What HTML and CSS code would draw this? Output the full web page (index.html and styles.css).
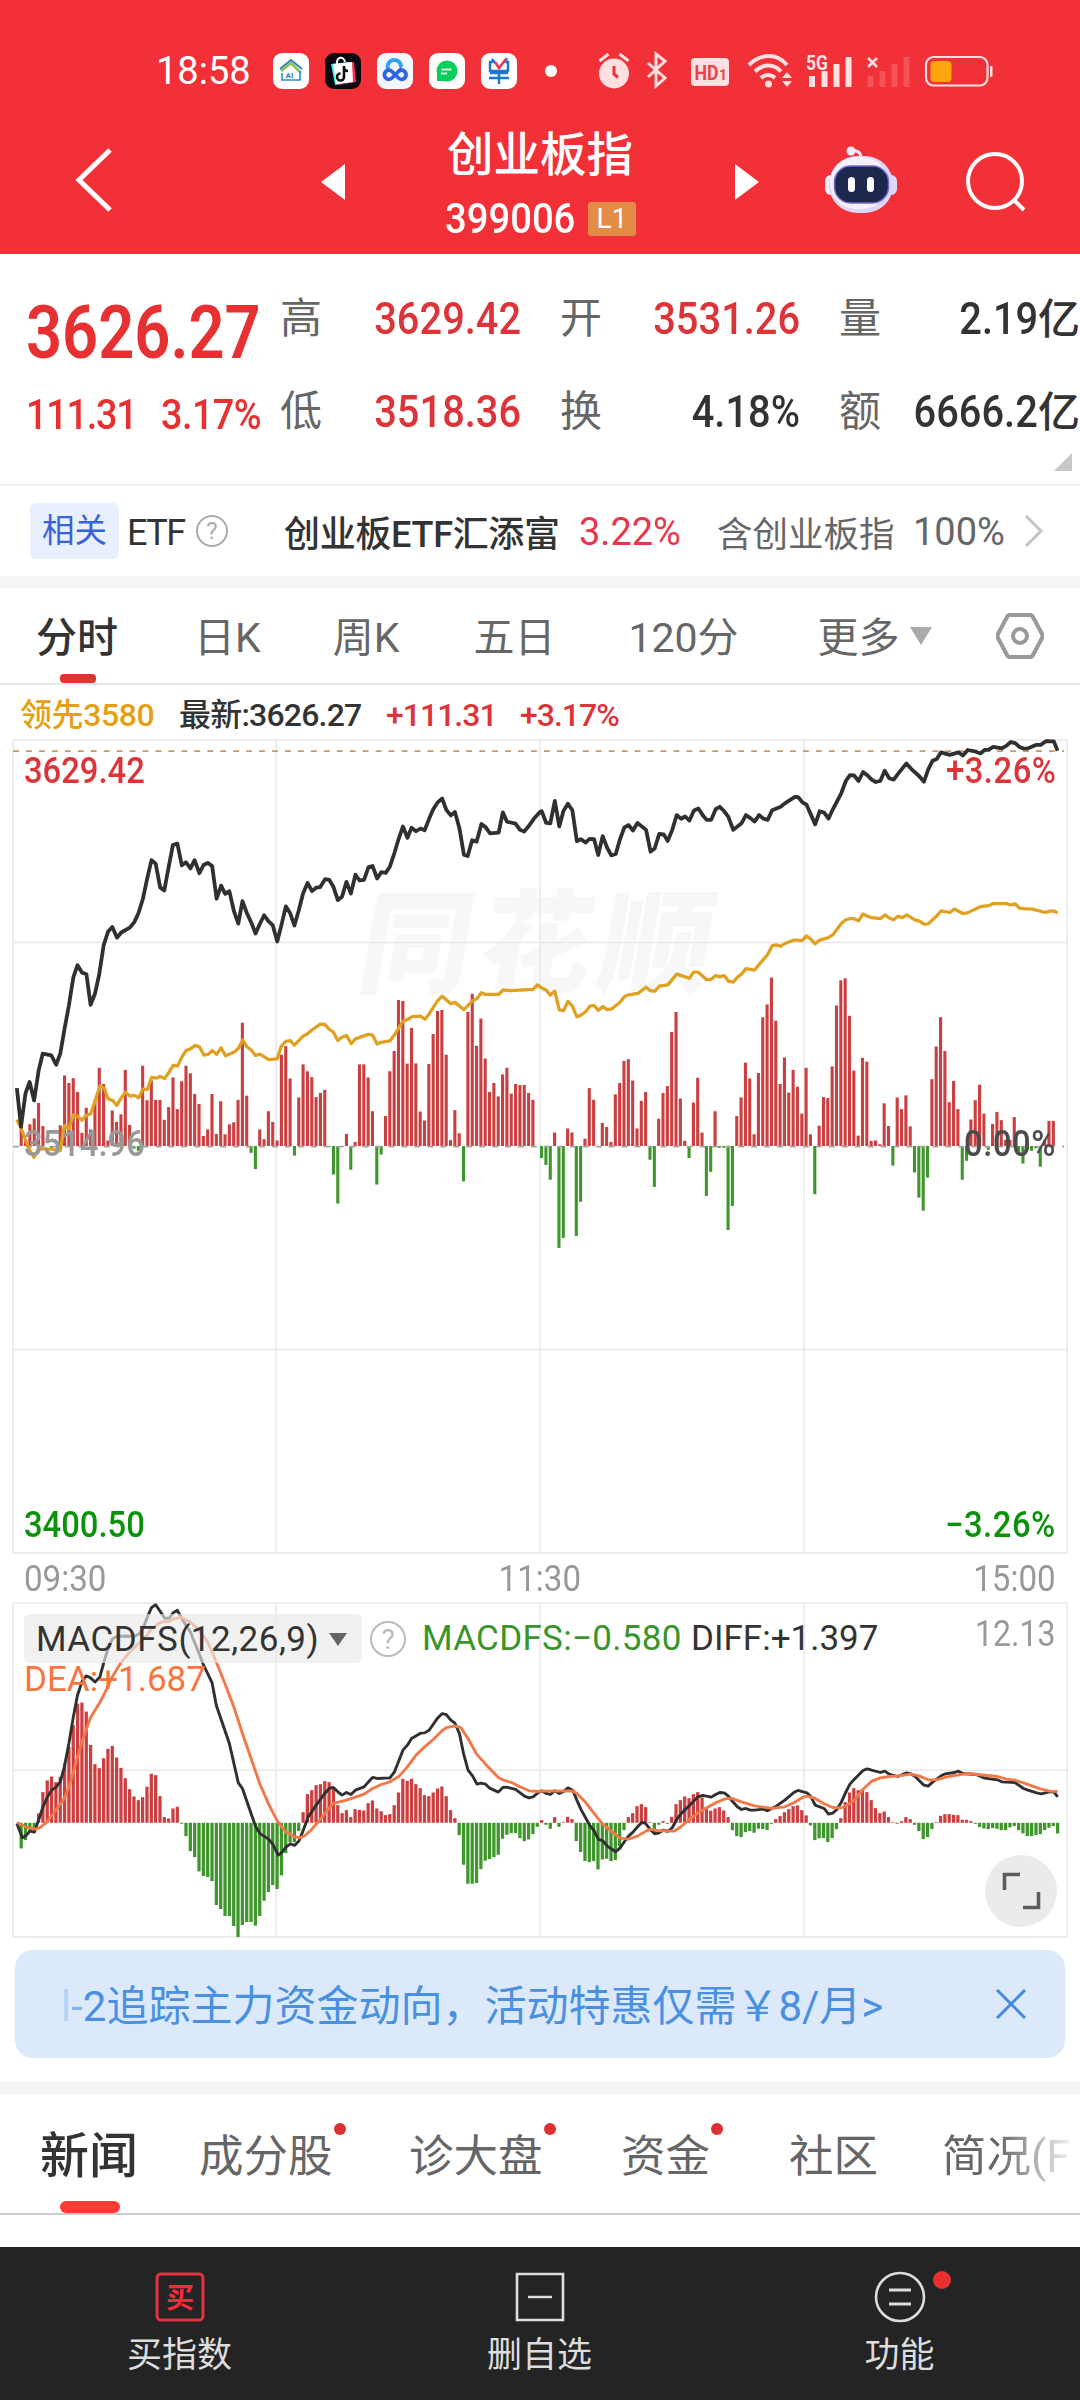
FILE: index.html
```html
<!DOCTYPE html>
<html lang="zh-CN">
  <head>
    <meta charset="UTF-8" />
    <meta name="viewport" content="width=device-width, initial-scale=1.0" />
    <title>创业板指 399006</title>
    <link rel="stylesheet" href="styles.css">
  </head>
  <body>
    <header class="header">
      <div class="status">
        <span class="clock">18:58</span>
        <div class="apps">
          <svg viewBox="0 0 36 36"><rect width="36" height="36" rx="9" fill="#fff"/><path d="M7 16L18 7l11 9" fill="none" stroke="#2b86b8" stroke-width="2"/><path d="M8 18l10-8 10 10" fill="none" stroke="#8cc152" stroke-width="2.5"/><path d="M9 20v7h18v-9" fill="none" stroke="#2f8fc6" stroke-width="1.6"/><text x="12.500" y="25" font-size="8" font-weight="700" fill="#2f7fc6">AI</text></svg>
          <svg viewBox="0 0 36 36"><rect width="36" height="36" rx="9" fill="#0c0810"/><path d="M10 11l19-2 2 20-18 3z" fill="#fe2c55"/><path d="M6 11l18-2 2 20-16 3z" fill="#25f4ee"/><path d="M8 11l19-2 1 20-17 2z" fill="#fff"/><path d="M12 11c-1-8 7-8 8-2" fill="none" stroke="#fff" stroke-width="2"/><path d="M19 13v11a3.500 3.500 0 1 1-3.500-3.500M19 14c0 3 2 4 4 4" fill="none" stroke="#111" stroke-width="2.600"/></svg>
          <svg viewBox="0 0 36 36"><rect width="36" height="36" rx="9" fill="#f3f7ff"/><path d="M11.500 17a6.700 6.700 0 1 1 12.500-3" fill="none" stroke="#36a3f2" stroke-width="4"/><path d="M25 15L15 25a4.500 4.500 0 1 1 0-6.500l6.500 6.500a4.500 4.500 0 1 0 0-6.500" fill="none" stroke="#2e63e8" stroke-width="3.800"/></svg>
          <svg viewBox="0 0 36 36"><rect width="36" height="36" rx="9" fill="#fff"/><circle cx="18" cy="18" r="10.500" fill="#06cf5c"/><path d="M8 21v7h8z" fill="#06cf5c"/><path d="M12.500 16.500h10M12 20.500h6" stroke="#d8ffe6" stroke-width="1.800"/></svg>
          <svg viewBox="0 0 36 36"><rect width="36" height="36" rx="9" fill="#fff"/><path d="M12 9H9v9h18V9h-3M18 18v13M9 20h18M8 25h20M11 6l3 4M26 5l-2 4" fill="none" stroke="#1b76d2" stroke-width="2.400"/><path d="M14 9l4 6 7-9" fill="none" stroke="#e8385a" stroke-width="2.600"/></svg>
        </div>
        <i class="more-dot"></i>
        <svg class="indicators" viewBox="0 0 400 40">
          <g fill="#ffdfe0">
            <circle cx="17" cy="22.500" r="15"/>
            <path d="M2.500 10l9-7M31.500 10l-9-7" stroke="#ffdfe0" stroke-width="3"/>
            <path d="M17 15v8l4 3.500" fill="none" stroke="#f13038" stroke-width="3"/>
            <path d="M51 12l17 15-9 8V3l9 7-17 16" fill="none" stroke="#ffdfe0" stroke-width="3"/>
            <rect x="94" y="7" width="38" height="28" rx="4"/>
            <text x="97.500" y="28.500" font-size="21" font-weight="700" textLength="24" lengthAdjust="spacingAndGlyphs" fill="#e8434a">HD</text>
            <text x="122" y="29" font-size="14" font-weight="700" fill="#e8434a">1</text>
            <path d="M152 14c12-12 28-12 38 0M158 20.500c8-8 19-8 26 0M164 27c4-4 10-4 14 0" fill="none" stroke="#ffdfe0" stroke-width="4"/>
            <circle cx="171.500" cy="33" r="3.500"/>
            <path d="M185 27l5-6 5 6zM185 30l5 6 5-6z"/>
            <text x="209" y="19" font-size="20" font-weight="700" textLength="22" lengthAdjust="spacingAndGlyphs">5G</text>
            <path d="M212 25h6v11h-6zM224.500 20h6v16h-6zM236.500 13h6v23h-6zM248.500 6h6v30h-6z"/>
            <path d="M271 7l9 9M280 7l-9 9" stroke="#ffdfe0" stroke-width="2.600"/>
            <path d="M270.500 25h6v11h-6zM282.500 20h6v16h-6zM294.500 13h6v23h-6zM306.500 6h6v30h-6z" opacity=".2"/>
            <rect x="329" y="6" width="61.500" height="28.500" rx="7.500" fill="none" stroke="#ffdfe0" stroke-width="2.200"/>
            <rect x="333.500" y="10" width="21" height="21" rx="4" fill="#ffa60f"/>
            <rect x="393" y="15" width="2.500" height="11" rx="1"/>
          </g>
        </svg>
      </div>
      <div class="titlebar">
        <svg class="back" viewBox="0 0 38 66"><path d="M35 3L4 33l31 30" fill="none" stroke="#fff" stroke-width="5"/></svg>
        <svg class="prev" viewBox="0 0 24 36"><path d="M24 0v36L0 18z" fill="#fff"/></svg>
        <div class="title">
          <h1>创业板指</h1>
          <div class="code"><span class="num">399006</span><span class="level">L1</span></div>
        </div>
        <svg class="next" viewBox="0 0 24 36"><path d="M0 0v36l24-18z" fill="#fff"/></svg>
        <svg class="robot" viewBox="0 0 72 68">
          <path d="M36 12c0-6-4-8-10-7" fill="none" stroke="#f4e6f4" stroke-width="3"/>
          <circle cx="26" cy="5" r="4.500" fill="#fbeaf1"/>
          <rect x="0" y="29" width="14" height="20" rx="6" fill="#f0edfd"/>
          <rect x="58" y="29" width="14" height="20" rx="6" fill="#dcdafb"/>
          <rect x="4" y="10" width="64" height="57" rx="28" fill="#dcd6f8"/>
          <rect x="5" y="11" width="58" height="52" rx="26" fill="#f4f1fd"/>
          <rect x="9.500" y="20" width="54" height="37" rx="16" fill="#1c284b" stroke="#7468d2" stroke-width="1.500"/>
          <rect x="23" y="31" width="7" height="15" rx="3.500" fill="#fff"/>
          <rect x="42" y="31" width="7" height="15" rx="3.500" fill="#fff"/>
        </svg>
        <svg class="search" viewBox="0 0 62 62"><circle cx="30" cy="30" r="27" fill="none" stroke="#fff" stroke-width="4"/><path d="M48 48l11 11" stroke="#fff" stroke-width="4"/></svg>
      </div>
    </header>

    <section class="quote">
      <div class="last">
        <div class="price">3626.27</div>
        <div class="change"><span>111.31</span><span>3.17%</span></div>
      </div>
      <dl class="stats">
        <div><dt>高</dt><dd class="up"><span class="num">3629.42</span></dd></div>
        <div><dt>开</dt><dd class="up"><span class="num">3531.26</span></dd></div>
        <div><dt>量</dt><dd><span class="num">2.19</span><b>亿</b></dd></div>
        <div><dt>低</dt><dd class="up"><span class="num">3518.36</span></dd></div>
        <div><dt>换</dt><dd><span class="num">4.18%</span></dd></div>
        <div><dt>额</dt><dd><span class="num">6666.2</span><b>亿</b></dd></div>
      </dl>
      <i class="corner"></i>
    </section>

    <section class="etf">
      <span class="tag">相关</span>
      <span class="etf-label">ETF</span>
      <i class="help">?</i>
      <span class="etf-name">创业板ETF汇添富</span>
      <span class="etf-rate">3.22%</span>
      <span class="etf-hold">含创业板指</span>
      <span class="etf-pct">100%</span>
      <svg class="arrow" viewBox="0 0 20 34"><path d="M2 2l15 15L2 32" fill="none" stroke="#c4c4c4" stroke-width="3"/></svg>
    </section>

    <nav class="periods">
      <a class="active">分时</a>
      <a>日K</a>
      <a>周K</a>
      <a>五日</a>
      <a>120分</a>
      <a>更多<i class="caret"></i></a>
      <svg class="gear" viewBox="0 0 48 46"><path d="M14 2h20q2 0 3 2l9 17q1 2 0 4l-9 17q-1 2-3 2H14q-2 0-3-2L2 25q-1-2 0-4l9-17q1-2 3-2z" fill="none" stroke="#999" stroke-width="4"/><circle cx="24" cy="23" r="7" fill="none" stroke="#999" stroke-width="4"/></svg>
    </nav>

    <div class="legend">
      <span class="lead">领先3580</span>
      <span class="now">最新:3626.27</span>
      <span class="up diff">+111.31</span>
      <span class="up">+3.17%</span>
    </div>

    <section class="chart">
      <div class="watermark">同花顺</div>
      <svg id="trend" viewBox="0 29 3136 2361" preserveAspectRatio="none"></svg>
      <span class="mark top left up">3629.42</span>
      <span class="mark top right up">+3.26%</span>
      <span class="mark mid left">3514.96</span>
      <span class="mark mid right">0.00%</span>
      <span class="mark low left">3400.50</span>
      <span class="mark low right">−3.26%</span>
    </section>
    <div class="times"><span>09:30</span><span>11:30</span><span>15:00</span></div>

    <section class="chart macd">
      <svg id="macd" viewBox="0 368 3136 1003" preserveAspectRatio="none"></svg>
      <div class="readout">
        <span class="picker">MACDFS(12,26,9)<i class="caret"></i></span>
        <i class="help">?</i>
        <span class="hist">MACDFS:−0.580</span>
        <span class="dif">DIFF:+1.397</span>
        <span class="max">12.13</span>
      </div>
      <span class="dea">DEA:+1.687</span>
      <svg class="expand" viewBox="0 0 72 72"><circle cx="36" cy="36" r="36" fill="#ebebeb"/><path d="M35 19.500H19.500V35M38 52.500h15.500V37" fill="none" stroke="#5c5c5c" stroke-width="3.600"/></svg>
    </section>

    <div class="banner">
      <p><em>l</em><em>-</em>2追踪主力资金动向，活动特惠仅需￥8/月&gt;</p>
      <svg viewBox="0 0 30 30"><path d="M1 1l28 28M29 1L1 29" stroke="#4189df" stroke-width="3"/></svg>
    </div>

    <nav class="news">
      <a class="active">新闻</a>
      <a class="dot">成分股</a>
      <a class="dot">诊大盘</a>
      <a class="dot">资金</a>
      <a>社区</a>
      <a class="cut">简况(F</a>
    </nav>

    <footer class="toolbar">
      <a>
        <svg viewBox="0 0 52 52"><rect x="3" y="3" width="46" height="46" rx="4" fill="none" stroke="#e23240" stroke-width="3"/><text x="26" y="37" font-size="28" font-weight="700" text-anchor="middle" fill="#f8293d">买</text></svg>
        买指数
      </a>
      <a>
        <svg viewBox="0 0 52 52"><path d="M3 3h46v46H3zM14 26h24" fill="none" stroke="#ddd" stroke-width="2.600"/></svg>
        删自选
      </a>
      <a class="dot">
        <svg viewBox="0 0 52 52"><circle cx="26" cy="26" r="24" fill="none" stroke="#ddd" stroke-width="2.600"/><path d="M15 19h22M15 33h22" stroke="#ddd" stroke-width="3"/></svg>
        功能
      </a>
    </footer>
    <script src="chart.js"></script>
  </body>
</html>
```

FILE: styles.css
```css
* {
  margin: 0;
  padding: 0;
  box-sizing: border-box;
}
body {
  width: 1080px;
  height: 2400px;
  overflow: hidden;
  display: flex;
  flex-direction: column;
  background: #fff;
  color: #333;
  font-family: Roboto, "Noto Sans CJK SC", sans-serif;
}
svg {
  display: block;
  flex: none;
}
i,
em {
  font-style: normal;
}
.up {
  color: #dc3438;
}
/* narrow figures */
.num {
  display: inline-block;
  transform: scaleX(0.9);
}

/* header */
.header {
  flex: none;
  height: 254px;
  background: #f23037;
  color: #fff;
}
.status {
  display: flex;
  align-items: center;
  height: 106px;
  padding: 36px 0 0 156px;
}
.clock {
  width: 117px;
  font-size: 38px;
  line-height: 70px;
}
.apps {
  display: flex;
  gap: 16px;
}
.apps svg {
  width: 36px;
  height: 36px;
}
.more-dot {
  width: 12px;
  height: 12px;
  margin-left: 28px;
  border-radius: 50%;
  background: #fff;
}
.indicators {
  width: 400px;
  height: 40px;
  margin-left: 40px;
}
.titlebar {
  display: flex;
  align-items: center;
  height: 148px;
  padding-left: 75px;
}
.back {
  width: 38px;
  height: 66px;
}
.prev,
.next {
  width: 24px;
  height: 36px;
  margin-top: 4px;
}
.prev {
  margin-left: 208px;
}
.title {
  width: 390px;
  padding-top: 16px;
  text-align: center;
}
.title h1 {
  font-size: 46.5px;
  font-weight: 500;
  line-height: 62px;
}
.code {
  display: flex;
  align-items: center;
  height: 66px;
  padding-left: 100px;
  font-size: 42px;
  font-weight: 500;
  line-height: 66px;
}
.code .num {
  width: 143px;
  transform: scaleX(0.91);
  transform-origin: left;
  text-align: left;
}
.level {
  width: 48px;
  height: 34px;
  border-radius: 3px;
  background: #e28c48;
  font-size: 28px;
  font-weight: 400;
  line-height: 34px;
}
.robot {
  width: 72px;
  height: 68px;
  margin-left: 66px;
}
.search {
  width: 62px;
  height: 62px;
  margin: 3px 0 0 68px;
}

/* quote */
.quote {
  flex: none;
  position: relative;
  display: flex;
  height: 232px;
  padding-top: 19px;
  border-bottom: 2px solid #eee;
}
.last {
  flex: none;
  width: 280px;
  padding-left: 26px;
  color: #e63031;
}
.price {
  width: 255px;
  height: 96px;
  padding-top: 10px;
  font-size: 73.5px;
  font-weight: 600;
  line-height: 100px;
  transform: scaleX(0.86);
  transform-origin: left;
}
.change {
  display: flex;
  font-size: 42px;
  font-weight: 500;
  letter-spacing: -0.6px;
  line-height: 92px;
  white-space: nowrap;
}
.change span {
  flex: none;
  transform: scaleX(0.9);
  transform-origin: left;
}
.change span:first-child {
  width: 135px;
  letter-spacing: -1.4px;
}
.stats {
  display: grid;
  grid-template-columns: 241px 240px 241px;
  column-gap: 39px;
  grid-auto-rows: 93px;
}
.stats div {
  display: flex;
  justify-content: space-between;
  line-height: 92px;
}
.stats dt {
  font-size: 42px;
  color: #666;
}
.stats dd {
  font-size: 44.5px;
  font-weight: 500;
  white-space: nowrap;
}
.stats .num {
  transform: scaleX(0.895);
  transform-origin: right;
}
.stats b {
  font-size: 42px;
  font-weight: 500;
}
.corner {
  position: absolute;
  right: 8px;
  bottom: 13px;
  border-left: 18px solid transparent;
  border-bottom: 18px solid #c8c8c8;
}

/* related fund */
.etf {
  flex: none;
  display: flex;
  align-items: center;
  height: 102px;
  padding-left: 30px;
  border-bottom: 12px solid #f4f4f4;
  font-size: 36px;
  white-space: nowrap;
}
.tag {
  width: 89px;
  height: 56px;
  border-radius: 6px;
  background: #e8effd;
  color: #3a62dd;
  font-size: 32.5px;
  line-height: 57px;
  text-align: center;
}
.etf-label {
  width: 68px;
  padding: 3px 0 0 8px;
  letter-spacing: -1.5px;
}
.help {
  width: 32px;
  height: 32px;
  margin-left: 9px;
  border: 2px solid #aaa;
  border-radius: 50%;
  color: #aaa;
  font-size: 24px;
  line-height: 29px;
  text-align: center;
}
.etf-name {
  width: 295px;
  margin-left: 56px;
  font-weight: 500;
  letter-spacing: -0.3px;
}
.etf-rate {
  width: 138px;
  padding-top: 2px;
  color: #e8344e;
  font-size: 38px;
}
.etf-hold {
  width: 196px;
  color: #666;
  font-size: 35.5px;
}
.etf-pct {
  width: 111px;
  padding-top: 2px;
  color: #666;
  font-size: 38px;
}
.arrow {
  width: 20px;
  height: 34px;
}

/* period tabs */
.periods {
  flex: none;
  display: flex;
  align-items: center;
  height: 97px;
  padding: 0 36px;
  border-bottom: 2px solid #e6e6e6;
  color: #666;
  font-size: 41px;
  line-height: 101px;
  white-space: nowrap;
}
.periods a {
  position: relative;
  height: 95px;
  margin-right: 74px;
}
.periods .active {
  color: #333;
  font-weight: 500;
}
.periods a:nth-child(1) {
  margin-right: 76px;
}
.periods a:nth-child(2) {
  margin-right: 72px;
}
.periods a:nth-child(4) {
  margin-right: 73px;
}
.periods a:nth-child(5) {
  margin-right: 79px;
}
.periods a:nth-child(6) {
  margin-right: 0;
}
.periods .active::after {
  content: "";
  position: absolute;
  left: 24px;
  bottom: 0;
  width: 36px;
  height: 9px;
  border-radius: 4px;
  background: #e93030;
}
.caret {
  display: inline-block;
  margin-left: 10px;
  border: 11px solid transparent;
  border-top: 18px solid #aaa;
  border-bottom: 0;
  vertical-align: 7px;
}
.gear {
  width: 48px;
  height: 46px;
  margin-left: auto;
}

.legend {
  flex: none;
  display: flex;
  height: 55px;
  padding-left: 20px;
  font-size: 32px;
  line-height: 60px;
  white-space: nowrap;
}
.lead {
  width: 159px;
  color: #e5a012;
  font-weight: 500;
  letter-spacing: -0.4px;
}
.now {
  width: 207px;
  font-weight: 500;
  letter-spacing: -0.8px;
}
.diff {
  width: 134px;
}
.legend .up {
  font-weight: 500;
  letter-spacing: -1px;
}

/* charts */
.chart {
  flex: none;
  position: relative;
  height: 813px;
}
#trend,
#macd {
  position: relative;
  width: 1080px;
  height: 100%;
  overflow: visible;
}
.watermark {
  position: absolute;
  left: 361px;
  top: 143px;
  color: #f7f7f7;
  font-size: 112px;
  font-weight: 900;
  letter-spacing: 8px;
  line-height: 126px;
  transform: skewX(-10deg);
}
.mark {
  position: absolute;
  font-size: 36px;
  font-weight: 500;
  line-height: 40px;
  transform: scaleX(0.91);
}
.left {
  left: 24px;
  transform-origin: left;
}
.right {
  right: 24px;
  letter-spacing: 0.6px;
  transform-origin: right;
}
.top {
  top: 11px;
}
.mid {
  top: 384px;
  color: #999;
}
.mid.right {
  color: #4c4c4c;
}
.low {
  bottom: 8px;
  color: #0b920b;
}
.times {
  flex: none;
  display: flex;
  justify-content: space-between;
  height: 50px;
  padding: 0 24px;
  color: #999;
  font-size: 36px;
  line-height: 53px;
}
.times span {
  transform: scaleX(0.92);
}
.times span:first-child {
  transform-origin: left;
}
.times span:last-child {
  transform-origin: right;
}
.macd {
  height: 334px;
}
.readout {
  position: absolute;
  left: 24px;
  top: 11px;
  right: 25px;
  display: flex;
  align-items: center;
  height: 49px;
  font-size: 35px;
  white-space: nowrap;
}
.picker {
  width: 338px;
  height: 49px;
  padding-left: 12px;
  border-radius: 6px;
  background: rgba(233, 233, 233, 0.65);
  letter-spacing: 0.5px;
  line-height: 51px;
}
.picker .caret {
  border-width: 13px 9px 0;
  border-top-color: #666;
  vertical-align: 5px;
}
.readout .help {
  width: 36px;
  height: 36px;
  margin-left: 8px;
  color: #bbb;
  border-color: #bbb;
  font-size: 28px;
  line-height: 33px;
}
.hist {
  width: 269px;
  margin-left: 16px;
  color: #38942b;
  letter-spacing: 0.3px;
}
.max {
  margin: -9px 0 0 auto;
  color: #999;
  font-size: 36px;
  transform: scaleX(0.89);
  transform-origin: right;
}
.dea {
  position: absolute;
  left: 24px;
  top: 57px;
  color: #f87540;
  font-size: 35px;
  line-height: 40px;
}
.expand {
  position: absolute;
  right: 23px;
  bottom: 10px;
  width: 72px;
  height: 72px;
}

/* banner */
.banner {
  flex: none;
  display: flex;
  align-items: center;
  justify-content: space-between;
  height: 108px;
  margin: 13px 15px 24px;
  padding: 0 39px 0 46px;
  border-radius: 18px;
  background: #dbe9fb;
  color: #4a90e2;
  font-size: 42px;
  white-space: nowrap;
}
.banner p {
  padding-bottom: 3px;
}
.banner svg {
  width: 30px;
  height: 30px;
}
.banner em {
  opacity: 0.6;
}
.banner em:first-child {
  opacity: 0.25;
}

/* news tabs */
.news {
  flex: none;
  display: flex;
  height: 133px;
  padding-left: 40px;
  border-top: 12px solid #f4f4f4;
  border-bottom: 2px solid #ccc;
  color: #666;
  font-size: 44.5px;
  line-height: 126px;
  white-space: nowrap;
}
.news a {
  position: relative;
  height: 119px;
  width: 210px;
}
.news .active {
  width: 159px;
  color: #333;
  font-size: 49px;
  font-weight: 500;
}
.news .active::after {
  content: "";
  position: absolute;
  left: 20px;
  bottom: 0;
  width: 60px;
  height: 12px;
  border-radius: 6px;
  background: #fc3b33;
}
.news a:nth-child(3) {
  width: 212px;
}
.news a:nth-child(4) {
  width: 168px;
}
.news a:nth-child(5) {
  width: 153px;
}
.news .dot::after {
  content: "";
  position: absolute;
  left: 135px;
  top: 29px;
  width: 12px;
  height: 12px;
  border-radius: 50%;
  background: #dc3033;
}
.news a:nth-child(4)::after {
  left: 90px;
}
.news .cut {
  width: 136px;
  background: linear-gradient(90deg, #666 40%, #fff 100%);
  background-clip: text;
  -webkit-background-clip: text;
  color: transparent;
}

/* bottom bar */
.toolbar {
  display: flex;
  height: 153px;
  margin-top: auto;
  background: #242424;
  color: #ddd;
  font-size: 35px;
}
.toolbar a {
  position: relative;
  width: 360px;
  padding: 24px 1px 0 0;
  line-height: 58px;
  text-align: center;
}
.toolbar svg {
  width: 52px;
  height: 52px;
  margin: 0 auto 4px;
}
.toolbar .dot::after {
  content: "";
  position: absolute;
  left: 213px;
  top: 24px;
  width: 18px;
  height: 18px;
  border-radius: 50%;
  background: #e83030;
}
```

FILE: chart.js
```js
// One bar per minute, the value is the y of its free end.
var STEP = 12.592;
var START = 49;
var HALF = 1568;

var strength = [
  1208, 1155, 1190, 1145, 1128, 1083, 1150, 1208, 1213, 1208, 1148, 1003, 1025, 1011, 1051, 1170, 1097, 1160, 1075, 981,
  1028, 1192, 1105, 1138, 1116, 987, 1147, 1216, 1222, 975, 1075, 1018, 1074, 1074, 1132, 1095, 1009, 1101, 1020, 975,
  997, 1057, 1086, 1179, 1160, 1057, 1173, 1078, 1174, 1145, 1139, 1074, 850, 1062, 1228, 1275, 1160, 1188, 1107, 1138,
  1192, 943, 918, 1012, 1236, 1067, 971, 991, 1008, 1066, 1054, 1045, 1211, 1291, 1375, 1211, 1173, 1277, 1196, 971,
  971, 1009, 1107, 1320, 1233, 1121, 991, 932, 784, 787, 969, 865, 968, 1108, 1134, 970, 883, 816, 813, 943,
  1191, 1104, 1171, 1311, 819, 766, 917, 838, 954, 1051, 1025, 1064, 1000, 981, 1056, 1028, 1031, 1031, 1054, 1074,
  1208, 1243, 1263, 1306, 1169, 1504, 1475, 1157, 1169, 1469, 1370, 1187, 1040, 1074, 1208, 1141, 1153, 1196, 1058, 1025,
  961, 956, 1018, 1157, 1077, 1051, 1248, 1327, 1129, 1054, 1034, 877, 819, 1070, 1193, 1243, 1082, 1010, 1169, 1353,
  1283, 1107, 1213, 1213, 1452, 1382, 1121, 1067, 966, 1012, 1174, 996, 834, 797, 719, 844, 1028, 951, 1053, 987,
  1036, 1114, 981, 1174, 1348, 1149, 1066, 1069, 977, 800, 727, 721, 830, 989, 1178, 952, 963, 1193, 1192, 1203,
  1084, 1150, 1265, 1067, 1101, 1061, 1151, 1285, 1358, 1396, 1300, 1014, 919, 834, 932, 1081, 1019, 1101, 1306, 1251,
  1131, 1075, 1030, 1114, 1219, 1144, 1109, 1133, 1190, 1190, 1124, 1225, 1259, 1220, 1222, 1215, 1268, 1190, 1135, 1135
];

var histogram = [
  1028, 1105, 1080, 1052, 1050, 1000, 936, 901, 889, 906, 890, 850, 800, 735, 670, 667, 694, 794, 852, 864,
  834, 806, 797, 832, 863, 894, 927, 949, 960, 951, 920, 881, 885, 948, 1011, 1015, 985, 980, 1031, 1068,
  1113, 1131, 1174, 1188, 1191, 1203, 1275, 1287, 1308, 1308, 1338, 1371, 1335, 1326, 1326, 1337, 1308, 1262, 1236, 1215,
  1227, 1186, 1119, 1086, 1086, 1053, 996, 942, 930, 915, 912, 903, 906, 925, 975, 999, 990, 1011, 987, 989,
  991, 969, 961, 985, 993, 1005, 1002, 975, 937, 896, 902, 896, 912, 924, 945, 948, 937, 925, 919, 948,
  990, 1014, 1065, 1154, 1211, 1211, 1209, 1167, 1142, 1137, 1131, 1124, 1076, 1064, 1059, 1059, 1074, 1083, 1078, 1062,
  1040, 1020, 1034, 1046, 1011, 1040, 1026, 1010, 1017, 1083, 1116, 1143, 1146, 1143, 1168, 1138, 1136, 1143, 1140, 1098,
  1050, 1011, 999, 978, 972, 981, 1026, 1062, 1034, 1023, 1031, 1010, 972, 960, 949, 954, 942, 936, 952, 982,
  992, 985, 981, 991, 1011, 1050, 1068, 1071, 1056, 1053, 1058, 1046, 1047, 1050, 1031, 1017, 1008, 996, 987, 978,
  976, 990, 1006, 1036, 1080, 1075, 1074, 1086, 1074, 1047, 1014, 966, 937, 924, 930, 926, 936, 960, 984, 999,
  994, 1011, 1026, 1031, 1023, 1011, 1017, 1034, 1053, 1077, 1071, 1047, 1026, 1007, 1002, 1002, 1004, 1005, 1019, 1019,
  1023, 1031, 1041, 1045, 1047, 1044, 1046, 1050, 1050, 1042, 1038, 1050, 1060, 1068, 1068, 1065, 1062, 1050, 1043, 1038,
  1060
];

// Lines are split into the morning and the afternoon session.
var price = [
  "49,1040 61,1152 74,1055 86,1022 99,1076 112,990 124,940 149,945 163,972 175,940 187,870 200,800 213,718 225,683 238,704 251,709 263,798 276,765 288,710 301,625 314,585 326,572 340,603 352,588 377,574 390,558 402,532 415,490 427,433 440,378 452,388 465,457 477,466 490,397 502,334 515,330 528,393 540,384 553,402 565,378 579,416 591,392 603,386 616,395 629,490 642,452 654,476 666,468 679,525 692,562 704,497 717,532 730,560 742,591 754,564 767,538 780,556 792,567 805,614 818,563 830,512 843,533 855,568 868,522 880,475 893,444 906,468 918,458 930,456 944,433 956,435 968,455 981,494 993,484 1006,441 1019,475 1032,420 1044,437 1057,435 1070,398 1082,395 1095,431 1107,413 1120,415 1132,397 1145,358 1157,318 1170,280 1183,313 1195,284 1208,294 1221,286 1233,291 1246,258 1258,230 1271,210 1284,199 1296,232 1309,248 1321,238 1334,285 1347,362 1358,366 1371,320 1384,324 1398,273 1410,282 1423,300 1448,298 1460,239 1472,266 1497,272 1510,290 1522,295 1536,278 1550,258 1568,238",
  "5,236 18,270 30,271 43,206 56,280 68,235 81,214 94,233 107,323 119,317 132,327 144,316 157,317 169,363 182,308 195,342 207,364 220,360 232,318 245,283 257,276 270,292 283,270 308,290 321,353 333,344 346,302 359,303 371,322 384,290 397,247 410,258 421,251 434,263 447,234 460,228 472,247 484,261 497,261 510,230 522,223 535,236 547,252 561,290 585,271 598,247 611,256 623,266 636,247 648,257 661,261 674,233 699,223 711,213 740,194 750,195 762,210 774,217 799,274 812,236 825,240 838,257 850,231 875,183 888,148 900,131 912,132 925,148 938,122 950,131 963,144 975,151 988,148 1001,118 1014,140 1027,144 1039,128 1064,97 1077,112 1102,135 1115,150 1127,115 1140,89 1152,84 1164,65 1190,72 1215,65 1228,74 1242,58 1266,63 1279,68 1291,58 1303,57 1316,49 1341,53 1354,46 1367,35 1380,38 1392,49 1404,54 1417,53 1442,43 1454,43 1470,32 1492,33 1503,60"
];
var lead = [
  "49,1132 61,1155 74,1190 86,1220 99,1241 112,1216 149,1217 175,1222 187,1148 200,1158 213,1118 225,1122 238,1133 250,1119 263,1115 275,1080 290,1034 303,1040 313,1070 327,1076 339,1090 351,1070 364,1052 377,1063 390,1061 403,1068 415,1043 428,1044 440,1009 453,1011 465,1006 478,1012 490,995 503,974 516,975 528,950 540,931 553,926 566,916 579,920 592,944 604,942 617,931 629,942 642,923 655,946 680,935 692,925 705,900 717,920 730,930 742,945 755,941 780,957 805,955 817,918 830,904 843,902 855,915 880,889 893,882 905,872 930,854 943,855 956,869 968,877 981,902 993,892 1006,887 1020,911 1032,897 1045,892 1070,884 1082,886 1095,912 1107,907 1132,903 1145,886 1170,846 1183,841 1197,832 1221,831 1234,840 1247,823 1271,786 1284,773 1309,795 1321,791 1347,812 1371,787 1385,780 1398,763 1410,768 1448,768 1461,755 1485,757 1548,753 1560,740",
  "5,749 18,755 30,770 43,758 56,813 69,815 81,788 94,802 107,833 119,828 132,818 145,802 157,800 170,814 182,803 195,812 208,810 233,790 246,773 258,769 284,765 308,747 320,757 334,758 346,744 371,740 397,709 434,721 446,703 459,703 484,725 497,724 510,713 522,717 535,713 548,730 561,732 573,718 585,709 598,693 623,697 661,652 674,627 686,624 699,628 711,620 738,610 762,611 774,598 787,608 799,621 812,610 837,603 850,595 875,562 888,551 900,548 912,548 925,554 938,534 950,540 963,545 988,548 1002,537 1014,546 1027,551 1039,541 1052,545 1065,537 1090,552 1102,555 1115,564 1127,563 1152,540 1165,525 1190,530 1203,520 1228,533 1241,531 1278,513 1303,510 1316,504 1354,504 1367,508 1380,505 1392,517 1404,519 1430,520 1467,530 1480,526 1492,525 1503,532"
];
var diff = [
  "49,1030 65,1073 77,1065 87,1053 100,1056 112,1020 125,980 137,952 150,930 162,922 175,905 187,860 200,790 213,710 225,645 238,605 250,587 262,592 276,605 290,590 302,545 315,500 327,475 340,468 365,467 390,468 405,460 417,440 430,405 440,382 452,373 465,393 478,414 492,413 503,397 515,390 528,415 553,455 578,520 590,552 616,608 628,675 666,790 692,908 704,925 729,1000 742,1038 754,1060 780,1077 792,1092 808,1125 818,1118 830,1101 843,1091 855,1096 868,1083 880,1052 895,1010 918,975 943,940 956,925 968,922 981,935 993,945 1006,937 1019,943 1032,930 1057,920 1070,905 1082,892 1095,895 1132,893 1145,876 1170,810 1183,795 1195,775 1221,759 1233,758 1246,750 1271,713 1284,700 1296,703 1309,720 1321,729 1334,760 1346,820 1359,870 1372,887 1385,912 1397,909 1410,912 1422,924 1447,936 1460,922 1472,921 1497,928 1523,948 1536,953 1548,950 1562,938",
  "5,932 18,940 30,943 43,932 56,940 68,935 81,923 95,930 107,960 120,990 132,1012 144,1035 157,1052 170,1078 182,1082 195,1098 220,1115 232,1104 245,1085 257,1068 270,1056 283,1040 295,1028 305,1028 320,1048 333,1061 346,1058 358,1050 371,1054 384,1043 397,1018 410,1000 434,976 459,950 472,946 497,951 510,943 522,937 535,938 547,948 560,965 573,980 585,988 598,985 610,990 623,990 648,987 660,992 686,978 711,960 737,937 749,931 775,938 787,950 799,975 825,985 838,1002 850,999 862,988 875,966 888,936 900,912 913,897 938,871 950,866 963,870 988,877 1001,873 1014,882 1039,889 1064,878 1077,881 1090,890 1115,915 1127,918 1140,906 1165,887 1177,881 1203,877 1215,873 1228,880 1266,883 1291,894 1328,899 1341,905 1379,907 1404,925 1417,930 1442,938 1455,941 1480,935 1492,935 1503,950"
];
var dea = [
  "49,1027 75,1040 100,1047 115,1043 137,1025 162,990 187,955 200,920 212,880 225,830 238,785 263,712 288,670 301,645 326,590 351,547 377,515 402,490 427,465 440,445 465,427 478,423 490,424 505,415 525,411 553,425 578,450 603,485 628,545 653,610 679,680 704,760 729,835 754,910 780,972 805,1022 830,1055 855,1070 870,1073 885,1067 905,1048 930,1018 955,985 968,970 1006,960 1057,942 1082,925 1107,913 1132,905 1157,890 1183,860 1208,825 1233,800 1258,778 1283,752 1296,742 1321,737 1338,742 1359,775 1384,822 1410,852 1447,892 1460,899 1485,907 1510,920 1536,932 1562,934",
  "5,933 94,932 107,940 131,965 157,1000 182,1032 207,1053 232,1074 257,1077 283,1068 308,1053 321,1048 346,1052 390,1053 409,1040 434,1018 459,998 484,983 510,968 535,957 555,954 585,965 623,977 648,981 673,985 711,980 737,968 762,952 775,948 799,955 825,971 850,982 875,983 888,978 913,960 938,927 963,903 988,893 1014,889 1039,887 1077,882 1102,888 1127,899 1152,899 1178,891 1215,884 1241,880 1328,889 1354,897 1379,900 1404,908 1430,918 1455,927 1480,933 1503,934"
];

function line(sessions, color, width) {
  var afternoon = sessions[1].split(" ").map(function (p) {
    var xy = p.split(",");
    return Number(xy[0]) + HALF + "," + xy[1];
  });
  return '<polyline points="' + sessions[0] + " " + afternoon.join(" ") +
    '" fill="none" stroke="' + color + '" stroke-width="' + width +
    '" stroke-linejoin="round"/>';
}

function bars(values, zero, width) {
  return values.map(function (y, i) {
    var x = START + i * STEP - width / 2;
    var color = y < zero ? "#cb3f40" : "#3f962c";
    return '<rect x="' + x.toFixed(1) + '" y="' + Math.min(y, zero) +
      '" width="' + width + '" height="' + Math.abs(y - zero) +
      '" fill="' + color + '"/>';
  }).join("");
}

function grid(top, bottom, rows) {
  var d = "";
  [38, 802, 1568, 2335, 3099].forEach(function (x) {
    d += "M" + x + " " + top + "V" + bottom;
  });
  [top].concat(rows, bottom).forEach(function (y) {
    d += "M38 " + y + "H3099";
  });
  return '<path d="' + d + '" fill="none" stroke="#e8e8e8" stroke-width="4.500"/>';
}

function dashes(y, color) {
  return '<path d="M38 ' + y + 'H3090" stroke="' + color +
    '" stroke-width="5" stroke-dasharray="17 20.600"/>';
}

document.getElementById("trend").innerHTML =
  grid(29, 2390, [617, 1799]) +
  bars(strength, 1208, 9) +
  dashes(61, "#c39a64") +
  dashes(1210, "#a5a5a5") +
  line(lead, "#e0a020", 9.5) +
  line(price, "#303030", 11);

document.getElementById("macd").innerHTML =
  grid(368, 1371, [870]) +
  bars(histogram, 1028, 9.5) +
  line(diff, "#303030", 8.5) +
  line(dea, "#f27848", 8.5);
```
